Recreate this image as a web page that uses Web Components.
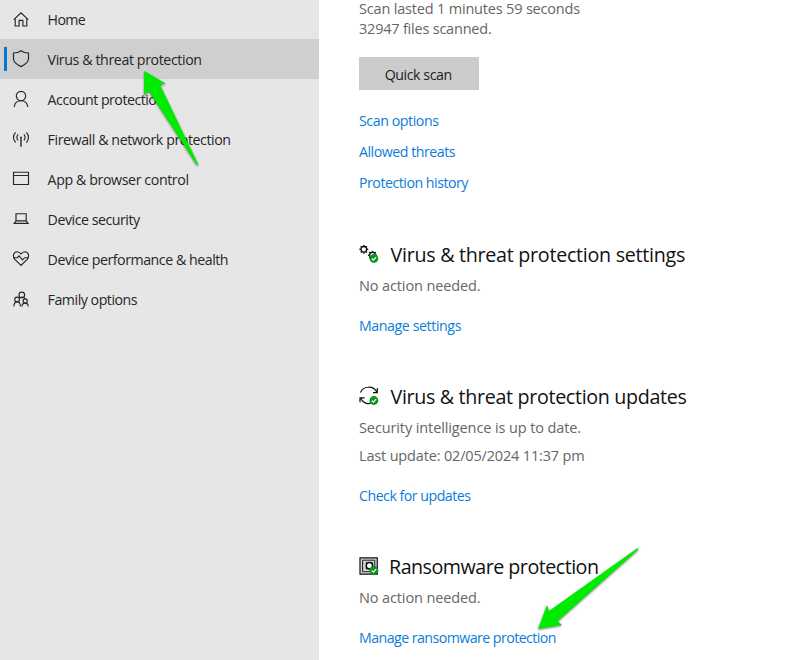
<!DOCTYPE html>
<html lang="en">
<head>
<meta charset="utf-8">
<title>Windows Security</title>
<style>
  body {
    margin: 0;
    background: #fff;
    font-family: "Open Sans", "Noto Sans", sans-serif;
    font-size: 14.2px;
    line-height: 20px;
  }
</style>
</head>
<body>
<security-app>
  <nav-item slot="nav" icon="home"><fit-text size="37.5">Home</fit-text></nav-item>
  <nav-item slot="nav" icon="shield" active><fit-text size="154">Virus &amp; threat protection</fit-text></nav-item>
  <nav-item slot="nav" icon="account"><fit-text size="117">Account protection</fit-text></nav-item>
  <nav-item slot="nav" icon="network"><fit-text size="183">Firewall &amp; network protection</fit-text></nav-item>
  <nav-item slot="nav" icon="browser"><fit-text size="141">App &amp; browser control</fit-text></nav-item>
  <nav-item slot="nav" icon="device"><fit-text size="92">Device security</fit-text></nav-item>
  <nav-item slot="nav" icon="health"><fit-text size="180.5">Device performance &amp; health</fit-text></nav-item>
  <nav-item slot="nav" icon="family"><fit-text size="89.5">Family options</fit-text></nav-item>

  <scan-panel>
    <fit-text size="221">Scan lasted 1 minutes 59 seconds</fit-text>
    <fit-text size="132.5">32947 files scanned.</fit-text>
    <scan-button slot="action"><fit-text size="67">Quick scan</fit-text></scan-button>
    <text-link slot="links"><fit-text size="79.5">Scan options</fit-text></text-link>
    <text-link slot="links"><fit-text size="96">Allowed threats</fit-text></text-link>
    <text-link slot="links"><fit-text size="109">Protection history</fit-text></text-link>
  </scan-panel>

  <status-section icon="gears">
    <fit-text slot="title" size="294.5">Virus &amp; threat protection settings</fit-text>
    <fit-text size="121.5">No action needed.</fit-text>
    <text-link slot="link"><fit-text size="102">Manage settings</fit-text></text-link>
  </status-section>
  <status-section icon="updates">
    <fit-text slot="title" size="296">Virus &amp; threat protection updates</fit-text>
    <fit-text size="222">Security intelligence is up to date.</fit-text>
    <fit-text size="225.5">Last update: 02/05/2024 11:37 pm</fit-text>
    <text-link slot="link"><fit-text size="111.5">Check for updates</fit-text></text-link>
  </status-section>
  <status-section icon="safe">
    <fit-text slot="title" size="209.5">Ransomware protection</fit-text>
    <fit-text size="121.5">No action needed.</fit-text>
    <text-link slot="link"><fit-text size="197">Manage ransomware protection</fit-text></text-link>
  </status-section>

  <pointer-arrow slot="overlay" points="144.3,71 165.7,83.5 160,84.8 198.3,164.5 197,165.3 148.8,91 144,95.5"></pointer-arrow>
  <pointer-arrow slot="overlay" points="538,629 547,605 549,611 637.6,548 638.4,549.5 557.5,621.3 562,625"></pointer-arrow>
</security-app>

<script>
const badge = '<circle cx="14.9" cy="14.5" r="4.4" fill="#0b9420" stroke="none"/><path d="M12.8 14.6l1.5 1.5 2.8-3" stroke="#fff" stroke-width="1.2"/>';

// eight short teeth around a ring
const gear = (x, y) => {
  let teeth = '';
  for (let i = 0; i < 8; i++) {
    teeth += `<path d="M${x} ${y - 3}v-1.4" stroke-width="1.5" transform="rotate(${i * 45} ${x} ${y})"/>`;
  }
  return `<circle cx="${x}" cy="${y}" r="2.8" stroke-width="1.3"/>${teeth}`;
};

const icons = {
  home: '<path d="M2.8 10.7L10 3.8l7.2 6.9M4.2 9.5V17h3.9v-5.700h3.800V17h3.900V9.500"/>',
  shield: '<path d="M10 1.7c2.2 1.7 4.5 2.3 7.5 2.3v5.6c0 3.5-3 6-7.5 8-4.5-2-7.5-4.5-7.5-8V4c3 0 5.3-.6 7.5-2.3z"/>',
  account: '<circle cx="10" cy="7" r="4.7"/><path d="M3.2 18c.4-3.900 3.100-6.300 6.800-6.300s6.400 2.400 6.800 6.300"/>',
  network: '<path d="M10 8.300v9.500" stroke-width="1.400"/><path d="M7.100 5.400c-1.400 1.700-1.400 4.200 0 5.900M12.900 5.400c1.400 1.700 1.400 4.200 0 5.900M4.600 3.300c-2.800 3-2.800 7.200 0 10.200M15.400 3.300c2.800 3 2.800 7.200 0 10.200"/><circle cx="10" cy="8.400" r=".8" fill="currentColor" stroke="none"/>',
  browser: '<path d="M2.500 3.200h15v12.300h-15zM2.500 6.500h15"/>',
  device: '<path d="M5 4.700h10.200v7.200H5zM5 11.900l-1.800 2.400h13.900l-1.900-2.400"/>',
  health: '<path d="M10 16.400L3.600 10.100C1.300 7 2.700 2.800 6 2.700c1.700 0 3 .8 4 2.300 1-1.500 2.300-2.300 4-2.300 3.300.1 4.700 4.300 2.400 7.400z"/><path d="M2.700 8.700h3.500L8 6.900l3.500 4 2.100-2.200h3.700"/>',
  family: '<circle cx="10.800" cy="5.900" r="2.800"/><circle cx="6.100" cy="10.500" r="2.400"/><circle cx="14.200" cy="12" r="2.100"/><path d="M2.900 17.500c0-2.900 1.300-4.600 3.200-4.600s3.300 1.700 3.300 4.600M11 17.500c0-2.100 1.300-3.400 3.200-3.400s3 1.300 3 3.400M8.500 9c2-1.100 4.500-.9 5.800.9"/>',
  gears: gear(4.800, 5.300) + gear(13.500, 11.200) + badge,
  updates: '<path d="M1.500 6.400C4.200-.2 14.700-.7 17.700 6.100M18.300 2.100v4.500h-4.300M16 14.700C11.800 19.700 4.400 18.100 1.900 12.200M1 16.300v-4.500h4.600" stroke-width="1.200"/>' + badge,
  safe: '<path d="M1 1.800h17.300v16.400H1z" fill="#d4d4d4" stroke-width="1.200"/><path d="M3.600 4.200h12.200v11.500H3.600zM3.600 6.500v2M3.600 11.500v2" stroke-width=".9"/><circle cx="10.400" cy="9.800" r="3.200" stroke-width="1.500" fill="#fff"/><path d="M7 6.500l1.400 1.400M13.800 6.500l-1.400 1.400M7 13.200l1.400-1.400" stroke-width="1.200"/>' + badge
};

class BaseElement extends HTMLElement {
  constructor () {
    super();
    this.attachShadow({ mode: 'open' });
  }

  connectedCallback () {
    this.shadowRoot.innerHTML = this.render();
  }
}

class LineIcon extends BaseElement {
  render () {
    return `
    <style>
      :host { display: block; flex: none; width: 20px; height: 20px; }
      svg { display: block; fill: none; stroke: currentColor; stroke-width: 1.15; }
    </style>
    <svg width="20" height="20" viewBox="0 0 20 20" aria-hidden="true">${icons[this.getAttribute('name')]}</svg>
    `;
  }
}

// One line of text, tracked so that it takes up the given width
class FitText extends BaseElement {
  connectedCallback () {
    super.connectedCallback();
    requestAnimationFrame(() => this.fit());
  }

  fit () {
    const width = this.getBoundingClientRect().width;
    const gap = (Number(this.getAttribute('size')) - width) / this.textContent.length;
    this.style.letterSpacing = gap.toFixed(3) + 'px';
  }

  render () {
    return `
    <style>
      :host { display: block; width: max-content; white-space: nowrap; }
    </style>
    <slot></slot>
    `;
  }
}

class NavItem extends BaseElement {
  render () {
    return `
    <style>
      :host { display: flex; align-items: center; height: 40px; color: #262626; }
      :host([active]) { background: #cfcfcf; }
      .mark { width: 3px; height: 24px; margin: 0 4px; }
      :host([active]) .mark { background: #0078d7; }
      line-icon { margin: 0 17px 0 -.4px; }
      .text { padding-top: 2px; }
    </style>
    <span class="mark"></span>
    <line-icon name="${this.getAttribute('icon')}"></line-icon>
    <span class="text"><slot></slot></span>
    `;
  }
}

class TextLink extends BaseElement {
  render () {
    return `
    <style>
      :host { display: block; color: #0a7ddb; }
    </style>
    <slot></slot>
    `;
  }
}

class ScanButton extends BaseElement {
  render () {
    return `
    <style>
      :host { display: block; }
      button {
        display: flex;
        align-items: center;
        justify-content: center;
        box-sizing: border-box;
        width: 119.5px;
        height: 33px;
        padding: 2px 1px 0 0;
        border: 0;
        background: #ccc;
        color: #1c1c1c;
        font: inherit;
      }
    </style>
    <button><slot></slot></button>
    `;
  }
}

class ScanPanel extends BaseElement {
  render () {
    return `
    <style>
      :host { display: block; padding-bottom: 1px; color: #666; }
      .lines { font-size: 14.5px; }
      .action { margin: 18px 0 21px; }
      .links { display: grid; gap: 11px; }
    </style>
    <div class="lines"><slot></slot></div>
    <div class="action"><slot name="action"></slot></div>
    <div class="links"><slot name="links"></slot></div>
    `;
  }
}

class StatusSection extends BaseElement {
  render () {
    return `
    <style>
      :host { display: block; color: #666; }
      h2 {
        display: flex;
        align-items: center;
        gap: 11.5px;
        height: 28px;
        margin: 0 0 8px;
        color: #111;
        font-size: 19.7px;
        font-weight: 400;
        line-height: 28px;
      }
      :host([icon="safe"]) h2 { gap: 10px; }
      .title { padding-top: 2px; }
      .lines { display: grid; gap: 8px; font-size: 14.5px; }
      .link { margin-top: 20px; }
    </style>
    <h2>
      <line-icon name="${this.getAttribute('icon')}"></line-icon>
      <span class="title"><slot name="title"></slot></span>
    </h2>
    <div class="lines"><slot></slot></div>
    <div class="link"><slot name="link"></slot></div>
    `;
  }
}

class PointerArrow extends BaseElement {
  render () {
    return `
    <style>
      :host { position: absolute; inset: 0; pointer-events: none; }
      svg { display: block; filter: drop-shadow(0 1px 1px rgba(0, 0, 0, .5)); }
    </style>
    <svg width="800" height="660" aria-hidden="true"><polygon points="${this.getAttribute('points')}" fill="#00eb00"/></svg>
    `;
  }
}

class SecurityApp extends BaseElement {
  render () {
    return `
    <style>
      :host {
        display: grid;
        grid-template-columns: 319px 1fr;
        position: relative;
        width: 800px;
        height: 660px;
        overflow: hidden;
      }
      nav { margin-top: -1px; background: #e6e6e6; }
      main { display: flex; flex-direction: column; gap: 46px; padding-left: 40px; margin-top: -1px; }
    </style>
    <nav><slot name="nav"></slot></nav>
    <main><slot></slot></main>
    <slot name="overlay"></slot>
    `;
  }
}

customElements.define('line-icon', LineIcon);
customElements.define('fit-text', FitText);
customElements.define('nav-item', NavItem);
customElements.define('text-link', TextLink);
customElements.define('scan-button', ScanButton);
customElements.define('scan-panel', ScanPanel);
customElements.define('status-section', StatusSection);
customElements.define('pointer-arrow', PointerArrow);
customElements.define('security-app', SecurityApp);
</script>
</body>
</html>
